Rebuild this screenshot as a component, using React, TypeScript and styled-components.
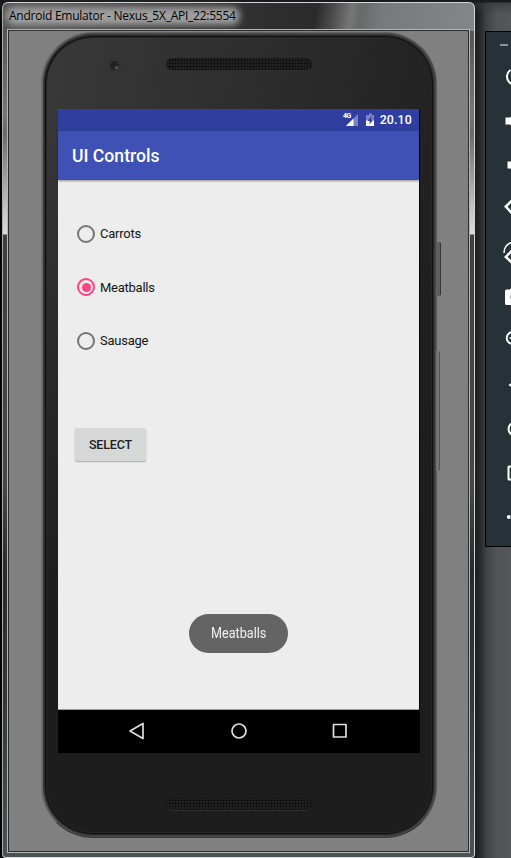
import React, { useState } from 'react';
import styled, { createGlobalStyle } from 'styled-components';

const GlobalStyle = createGlobalStyle`
  * { box-sizing: border-box; }
  html, body { margin: 0; height: 858px; overflow: hidden; background: #111; }
`;

const Desktop = styled.div`
  display: flex;
  align-items: flex-start;
  width: 511px;
  height: 858px;
  padding: 2px 0 0 2px;
  overflow: hidden;
  font-family: Roboto, sans-serif;
  background:
    linear-gradient(#181a1b 0 2px, rgba(50, 52, 54, 0.6) 3px, transparent 14px),
    linear-gradient(90deg, #050505 0 470px, #1b1c1d 475px, #292c2e 481px, #3e4245 486px, #505457 496px, #54585b 511px);
`;

const Window = styled.section`
  flex: none;
  display: flex;
  flex-direction: column;
  width: 473px;
  height: 856px;
  padding: 0 4px 4px;
  border: 1px solid #d4d7d8;
  border-left-color: #a9adae;
  border-radius: 6px 6px 4px 4px;
  background:
    linear-gradient(100deg, #555 0, #525252 48px, #303030 240px, #2b2b2b 310px, #4b4b4b 326px, #777 345px, #67696a 354px, #77797a 375px, #858688 471px) 0 0 / 100% 28px no-repeat,
    linear-gradient(#555 28px, #777 110px, #6b6969 130px, #c9c8c7 210px, #dcdcdc 231px, #3d3f41 232px, #454749 480px, #272a2c 570px, #34383a 700px, #4c5255 856px);
`;

const TitleBar = styled.header`
  flex: none;
  display: flex;
  align-items: center;
  height: 26px;
  padding-left: 2px;
`;

const Title = styled.span`
  position: relative;
  z-index: 0;
  color: #000;
  font: 12px/18px "Open Sans", sans-serif;
  letter-spacing: -0.25px;
  white-space: nowrap;
  &::before {
    content: '';
    position: absolute;
    z-index: -1;
    inset: 0 -4px 0 -3px;
    border-radius: 8px;
    background: #a0a0a0;
    filter: blur(3.5px);
  }
`;

const Client = styled.main`
  flex: none;
  display: flex;
  width: 463px;
  height: 824px;
  border: 1px solid #b4b7b8;
  background: #808080;
  box-shadow: inset 0 0 0 1px #292b2c;
  padding: 2px 0 0 33px;
`;

const Phone = styled.div`
  position: relative;
  display: flex;
  flex-direction: column;
  width: 396px;
  height: 806px;
  border: 1px solid;
  border-color: #626262 #5c5959 #3a3a3a #6e6e6e;
  border-radius: 52px;
  padding: 76px 11px 0 11px;
  background:
    linear-gradient(transparent 10%, #1d1d1e 72%),
    linear-gradient(100deg, #39393a 0, #2c2c2c 45%, #1d1d1d 92%);
  box-shadow:
    inset 1px 0 0 0 #666,
    inset 0 0 0 1px #4c4b4b,
    inset 0 0 0 2px #3b3a3a,
    inset 0 0 0 3px #2b2b2b,
    inset 0 0 0 4px #101010,
    inset 0 0 0 5px #262626;
`;

const SideButton = styled.i<{ $top: number; $height: number; $width: number }>`
  position: absolute;
  left: 394px;
  top: ${p => p.$top}px;
  width: ${p => p.$width}px;
  height: ${p => p.$height}px;
  border-right: 1px solid ${p => (p.$width > 4 ? '#383535' : '#595455')};
  border-radius: 0 2px 2px 0;
  background: ${p => (p.$width > 4 ? '#625e60' : '#777374')};
`;

const Camera = styled.i`
  position: absolute;
  left: 65px;
  top: 25px;
  width: 15px;
  height: 15px;
  border: 3px solid #323334;
  border-radius: 50%;
  background: radial-gradient(circle at 75% 75%, #705057 0 1px, #28272e 2px, #202026 5px);
`;

const Speaker = styled.i<{ $top: number }>`
  position: absolute;
  left: 124px;
  top: ${p => p.$top}px;
  width: 146px;
  height: 13px;
  border: 1px solid #191919;
  border-bottom-color: #303030;
  border-radius: 7px;
  background: radial-gradient(circle, #0b0b0b 0.8px, transparent 1.2px) 1px 0 / 3px 3px, #222;
`;

const Screen = styled.div`
  flex: none;
  display: flex;
  flex-direction: column;
  width: 362px;
  height: 644px;
  margin-left: 5px;
  border-right: 1px solid #050505;
  background: #ededed;
`;

const StatusBar = styled.div`
  flex: none;
  display: flex;
  align-items: center;
  justify-content: flex-end;
  height: 22px;
  padding-right: 7px;
  color: #fff;
  background: #303f9f;
  font-weight: 500;
  font-size: 12.3px;
  line-height: 22px;
  letter-spacing: 0.2px;
`;

const StatusIcons = styled.svg`
  width: 34px;
  height: 20px;
  margin-right: 4px;
`;

const AppBar = styled.div`
  flex: none;
  display: flex;
  align-items: center;
  height: 49px;
  padding: 1px 14px 0;
  color: #fff;
  background: #3f51b5;
  font-size: 17.6px;
  font-weight: 500;
  box-shadow: 0 1px 2px rgba(0, 0, 0, 0.4);
`;

const Content = styled.div`
  flex: 1;
  display: flex;
  flex-direction: column;
  align-items: flex-start;
  padding: 27px 0 0 17px;
  border-bottom: 1px solid #a0a0a0;
`;

const Option = styled.button`
  flex: none;
  display: flex;
  align-items: center;
  height: 53.6px;
  padding: 0 0 0 2px;
  border: 0;
  background: none;
  color: #151515;
  font: 13px Roboto, sans-serif;
  letter-spacing: -0.25px;
`;

const Radio = styled.span<{ $on: boolean }>`
  display: grid;
  place-items: center;
  width: 18px;
  height: 18px;
  margin-right: 5px;
  border: 2px solid ${p => (p.$on ? '#ff4081' : '#757575')};
  border-radius: 50%;
  &::after {
    content: '';
    width: 9px;
    height: 9px;
    border-radius: 50%;
    background: ${p => (p.$on ? '#ff4081' : 'transparent')};
  }
`;

const SelectButton = styled.button`
  width: 71px;
  height: 33px;
  margin: 60px 0 0 0;
  padding: 1px 0 0;
  border: 0;
  border-radius: 2px;
  color: #202020;
  background: #d6d7d7;
  font: 500 12.5px Roboto, sans-serif;
  letter-spacing: -0.15px;
  box-shadow: 0 1px 1.5px rgba(0, 0, 0, 0.28);
`;

const Toast = styled.div`
  display: grid;
  place-items: center;
  width: 99px;
  height: 39px;
  margin: 153px 0 0 114px;
  border-radius: 20px;
  color: #f2f2f2;
  background: #646464;
  font-size: 14px;
`;

const ToastText = styled.span`
  transform: scaleX(0.9);
`;

const NavBar = styled.nav`
  flex: none;
  display: flex;
  align-items: center;
  justify-content: space-between;
  height: 43px;
  padding: 0 70px 2px 70px;
  background: #000;
`;

const NavIcon = styled.svg`
  width: 18px;
  height: 18px;
  fill: none;
  stroke: #dedede;
  stroke-width: 1.7;
  stroke-linejoin: round;
`;

const ToolPanel = styled.aside`
  flex: none;
  display: flex;
  flex-direction: column;
  width: 60px;
  height: 516px;
  margin: 29px 0 0 10px;
  border: 1px solid #000;
  background: #263238;
`;

const PanelHead = styled.div`
  flex: none;
  height: 23px;
  padding: 12px 0 0 14px;
  &::before {
    content: '';
    display: block;
    width: 8px;
    height: 2px;
    background: #89949a;
  }
`;

const ToolIcon = styled.svg`
  flex: none;
  width: 32px;
  height: 44px;
  margin-left: 13px;
  fill: none;
  stroke: #fff;
  stroke-width: 2;
`;

const tools: React.ReactNode[] = [
  <path d="M11.5 15A8 8 0 1 0 20.5 15M16 12V21" />,
  <path d="M6.5 18.5H11L16 14V30L11 25.5H6.5Z" fill="#fff" stroke="none" />,
  <path d="M8.5 18.5H13L18 14V30L13 25.5H8.5Z" fill="#fff" stroke="none" />,
  <path d="M6.8 19.5L15 11.5L26 23L17 31Z" strokeWidth="2.5" />,
  <><path d="M6.8 26L14 18.5L23 27L15.5 34Z" strokeWidth="2.5" /><path d="M5 22C5 17 8 12.5 14 11" strokeWidth="1.5" /></>,
  <><path d="M6 16Q6 14.5 7.5 14.5H11L13 12H20L22 14.5H26V30H7.5Q6 30 6 28.5Z" fill="#fff" stroke="none" /><circle cx="16" cy="22" r="4.5" fill="#263238" stroke="none" /></>,
  <><circle cx="13.5" cy="19" r="5.8" /><path d="M10.5 19H17M13.5 15.5V22.5M18 23.5L24 29.5" strokeWidth="1.5" /></>,
  <path d="M11 22L21 15.5V28.5Z" strokeWidth="1.8" />,
  <circle cx="16" cy="22" r="6.5" />,
  <rect x="9.5" y="15.5" width="13" height="13" rx="0.5" />,
  <g fill="#fff" stroke="none"><circle cx="9.8" cy="22" r="1.9" /><circle cx="16" cy="22" r="1.9" /><circle cx="22" cy="22" r="1.9" /></g>,
];

const foods = ['Carrots', 'Meatballs', 'Sausage'];

export default function App() {
  const [selected, setSelected] = useState('Meatballs');
  return (
    <>
      <GlobalStyle />
      <Desktop>
        <Window>
          <TitleBar><Title>Android Emulator - Nexus_5X_API_22:5554</Title></TitleBar>
          <Client>
            <Phone>
              <SideButton $top={209} $height={54} $width={5} />
              <SideButton $top={318} $height={120} $width={4} />
              <Camera />
              <Speaker $top={25} />
              <Screen>
                <StatusBar>
                  <StatusIcons viewBox="0 0 34 20">
                    <text x="1" y="8.3" fill="#fff" fontSize="7" fontWeight="700" letterSpacing="-.5">4G</text>
                    <path d="M16 4V16H4Z" fill="#7984c2" />
                    <path d="M11.5 8.5V16H4Z" fill="#fff" />
                    <path d="M25 5H27V3.5H30V5H32V16H24V5Z" fill="#7984c2" />
                    <path d="M24 10.5H32V16H24Z" fill="#fff" />
                    <path d="M29.7 5.8L25.5 11H27.6V14.5L31 9.7H29Z" fill="#303f9f" />
                  </StatusIcons>
                  20.10
                </StatusBar>
                <AppBar>UI Controls</AppBar>
                <Content>
                  {foods.map(food => (
                    <Option key={food} role="radio" aria-checked={selected === food} onClick={() => setSelected(food)}>
                      <Radio $on={selected === food} />
                      {food}
                    </Option>
                  ))}
                  <SelectButton>SELECT</SelectButton>
                  <Toast><ToastText>{selected}</ToastText></Toast>
                </Content>
                <NavBar>
                  <NavIcon viewBox="0 0 18 18"><path d="M2 9L15 1.5V16.5Z" /></NavIcon>
                  <NavIcon viewBox="0 0 18 18"><circle cx="9" cy="9" r="7" /></NavIcon>
                  <NavIcon viewBox="0 0 18 18"><rect x="2.5" y="2.5" width="12.5" height="12.5" /></NavIcon>
                </NavBar>
              </Screen>
              <Speaker $top={765} />
            </Phone>
          </Client>
        </Window>
        <ToolPanel>
          <PanelHead />
          {tools.map((icon, i) => <ToolIcon key={i} viewBox="0 0 32 44">{icon}</ToolIcon>)}
        </ToolPanel>
      </Desktop>
    </>
  );
}
